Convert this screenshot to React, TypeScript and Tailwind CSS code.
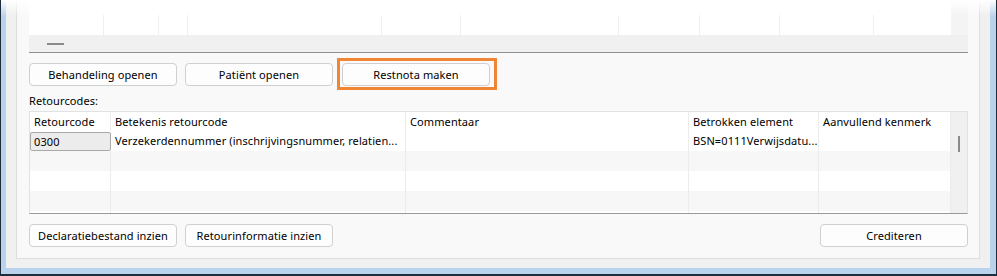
import React from "react";

function Btn({ label, className = "" }: { label: string; className?: string }) {
  return (
    <div
      className={`w-[148px] h-[23px] flex items-center justify-center rounded-[4px] border border-[#d0d0d0] bg-[#fdfdfd] text-[11px] text-black leading-none ${className}`}
    >
      {label}
    </div>
  );
}

const cols = [81, 295, 283, 130, 132];
const headers = ["Retourcode", "Betekenis retourcode", "Commentaar", "Betrokken element", "Aanvullend kenmerk"];
const topCols = [75, 55, 29, 194, 79, 158, 81, 80, 94];

export default function App() {
  const rowBgs = ["bg-white", "bg-[#f7f7f7]", "bg-white", "bg-[#f7f7f7]", "bg-white"];
  return (
    <div className="w-[997px] h-[276px] relative overflow-hidden border-l border-r border-b-2 border-[#1f2d3b] font-['Noto_Sans',sans-serif] text-[11px] tracking-[0.1px] text-black">
      <div className="h-full bg-[#bad3ec] pl-[5px] pr-[6px] pb-[6px]">
        <div className="h-full bg-[#f0f0f0] pl-[10px] pr-[10px] pb-[9px]">
          <div className="h-full border-l border-r border-b border-[#dedede] bg-[#f9f9f9] pl-[12px] pr-[11px] flex flex-col">
            {/* upper table */}
            <div className="h-[53px] flex flex-col border-b border-[#8e8e8e]">
              <div className="h-[35px] flex">
                <div className="flex-1 flex flex-col bg-white">
                  <div className="h-[15px]" />
                  <div className="h-[20px] flex">
                    {topCols.map((w, i) => (
                      <div key={i} className="h-full border-r border-[#efefef]" style={{ width: w }} />
                    ))}
                  </div>
                </div>
                <div className="w-[17px] bg-[#f4f4f4]" />
              </div>
              <div className="h-[17px] bg-[#f0f0f0] relative">
                <div className="absolute left-[18px] top-[8px] w-[17px] h-[2px] bg-[#8a8a8a]" />
              </div>
            </div>

            {/* first button row */}
            <div className="mt-[10px] flex gap-[8px]">
              <Btn label="Behandeling openen" />
              <Btn label="Patiënt openen" />
              <div className="relative ml-[1px]">
                <Btn label="Restnota maken" />
                <div className="absolute left-[-5px] right-[-7px] top-[-5px] bottom-[-4px] border-[3px] border-[#ef8535] pointer-events-none" />
              </div>
            </div>

            <div className="mt-[7px] h-[16px] leading-[16px]">Retourcodes:</div>

            {/* retourcodes table */}
            <div className="mt-[2px] h-[103px] border border-[#e2e2e2] border-b-[#9a9a9a] flex overflow-hidden">
              <div className="flex-1 flex flex-col">
                <div className="h-[19px] shrink-0 flex bg-white">
                  {headers.map((h, i) => (
                    <div
                      key={i}
                      className="h-full border-r border-[#ececec] pl-[4px] leading-[20px] whitespace-nowrap overflow-hidden"
                      style={{ width: cols[i] }}
                    >
                      {h}
                    </div>
                  ))}
                </div>
                {rowBgs.map((bg, r) => (
                  <div key={r} className={`h-[20px] shrink-0 flex ${bg}`}>
                    {cols.map((w, i) => {
                      if (r === 0 && i === 0) {
                        return (
                          <div key={i} className="h-full relative" style={{ width: w }}>
                            <div className="absolute left-0 right-0 top-[1px] bottom-[0px] border border-[#a9a9a9] rounded-[2px] bg-[#ececec] pl-[3px] leading-[17px]">
                              0300
                            </div>
                          </div>
                        );
                      }
                      let text = "";
                      if (r === 0 && i === 1) text = "Verzekerdennummer (inschrijvingsnummer, relatien...";
                      if (r === 0 && i === 3) text = "BSN=0111Verwijsdatu...";
                      return (
                        <div
                          key={i}
                          className="h-full border-r border-[#ececec] pl-[4px] leading-[20px] whitespace-nowrap overflow-hidden"
                          style={{ width: w }}
                        >
                          {text}
                        </div>
                      );
                    })}
                  </div>
                ))}
              </div>
              <div className="w-[17px] bg-[#f0f0f0] relative">
                <div className="absolute left-[7px] top-[24px] w-[2px] h-[16px] bg-[#8a8a8a]" />
              </div>
            </div>

            {/* bottom buttons */}
            <div className="mt-[10px] flex gap-[8px]">
              <Btn label="Declaratiebestand inzien" />
              <Btn label="Retourinformatie inzien" />
              <div className="flex-1" />
              <Btn label="Crediteren" />
            </div>
          </div>
        </div>
      </div>
      <div className="absolute left-0 right-0 top-0 h-[16px] bg-gradient-to-b from-white to-transparent pointer-events-none" />
    </div>
  );
}
